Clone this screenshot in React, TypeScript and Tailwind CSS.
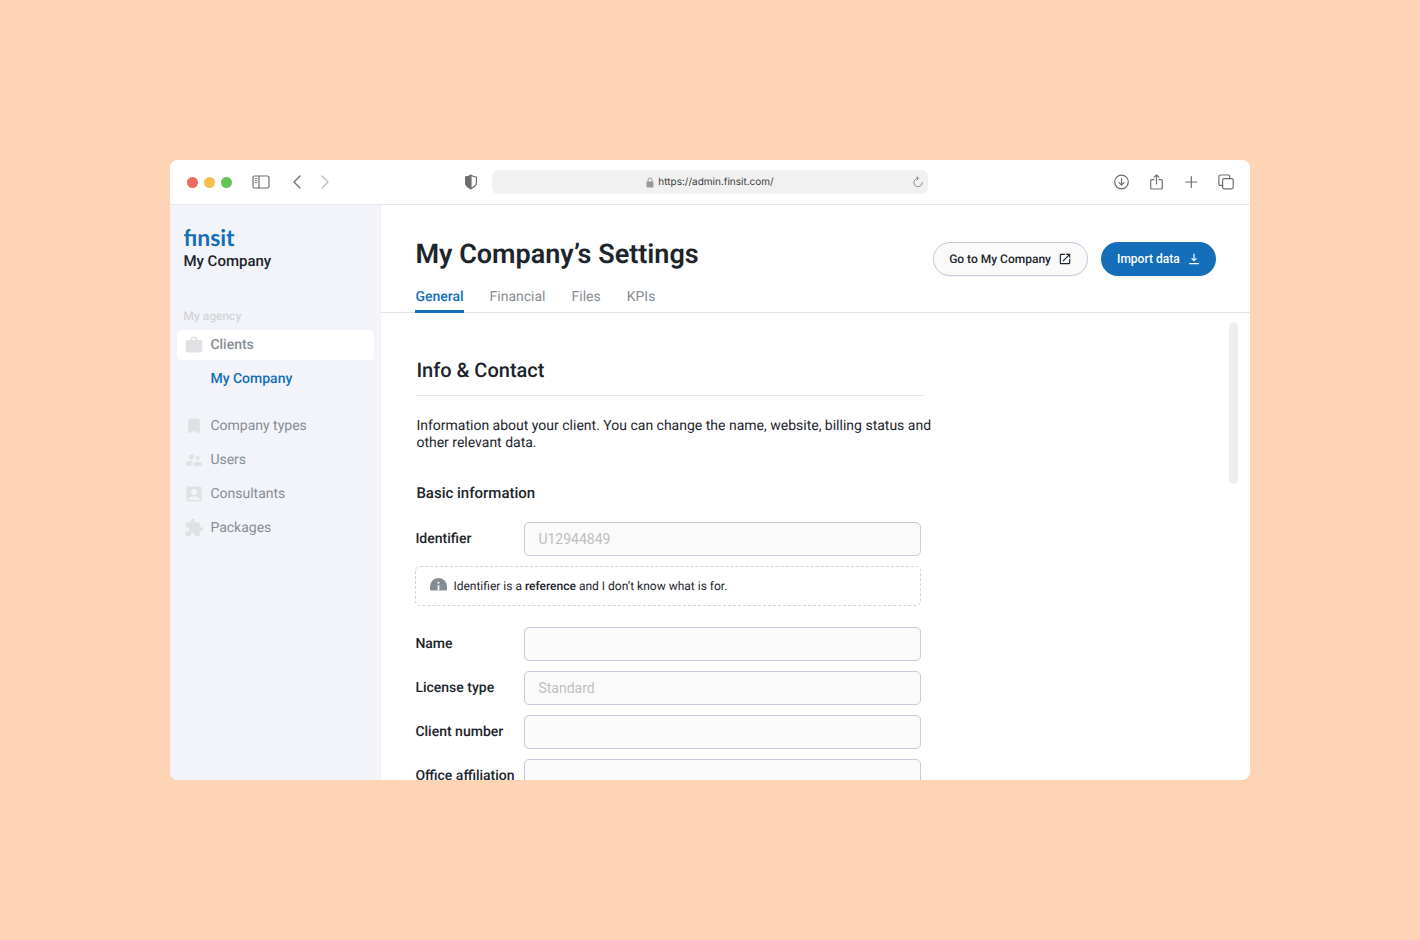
import type { ReactNode } from "react";
import {
  MdAccountBox,
  MdBookmark,
  MdExtension,
  MdOpenInNew,
  MdSupervisorAccount,
  MdWork,
} from "react-icons/md";

type StrokeIconProps = { className: string; viewBox: string; width?: number; children: ReactNode };

function StrokeIcon({ className, viewBox, width = 1.2, children }: StrokeIconProps) {
  return (
    <svg
      className={className}
      viewBox={viewBox}
      fill="none"
      stroke="currentColor"
      strokeWidth={width}
      strokeLinecap="round"
      strokeLinejoin="round"
      aria-hidden="true"
    >
      {children}
    </svg>
  );
}

function BrowserBar() {
  return (
    <header className="grid h-[45px] shrink-0 grid-cols-[minmax(0,1fr)_minmax(0,436px)_minmax(0,1fr)] items-center border-b border-[#e6e7e9] bg-white text-[#6e6e6e]">
      <div className="flex items-center pl-[17px] pr-3.5">
        <div className="flex gap-1.5">
          <span className="size-[11px] rounded-full bg-[#ed6a5e]" />
          <span className="size-[11px] rounded-full bg-[#f4bf4f]" />
          <span className="size-[11px] rounded-full bg-[#61c554]" />
        </div>
        <button type="button" aria-label="Toggle sidebar" className="ml-5">
          <StrokeIcon className="h-[14px] w-[18px]" viewBox="0 0 18 14">
            <rect x="1" y="1" width="16" height="12" rx="1.5" />
            <path d="M7 1v12" />
            <path d="M3 3.6h2M3 5.6h2M3 7.6h2" strokeWidth="0.9" />
          </StrokeIcon>
        </button>
        <button type="button" aria-label="Back" className="ml-[19px]">
          <StrokeIcon className="h-[14px] w-4" viewBox="0 0 16 14" width={1.4}>
            <path d="M11 1 5 7l6 6" />
          </StrokeIcon>
        </button>
        <button type="button" aria-label="Forward" className="ml-3 text-[#bdbdbd]">
          <StrokeIcon className="h-[14px] w-4" viewBox="0 0 16 14" width={1.4}>
            <path d="m5 1 6 6-6 6" />
          </StrokeIcon>
        </button>
        <button type="button" aria-label="Privacy report" className="ml-auto">
          <StrokeIcon className="h-4 w-[14px]" viewBox="0 0 14 16">
            <path d="M7 1.2c1.700 1 3.300 1.600 5.400 1.800v6c0 2.300-2.200 4-5.400 5.600C3.800 13 1.600 11.300 1.600 9V3C3.700 2.800 5.300 2.200 7 1.200Z" />
            <path d="M7 1.200v13.400C3.800 13 1.600 11.300 1.600 9V3C3.700 2.800 5.300 2.200 7 1.200Z" fill="currentColor" />
          </StrokeIcon>
        </button>
      </div>
      <div className="flex h-6 items-center rounded-md bg-[#f1f1f1] px-1">
        <span className="flex-1" />
        <svg className="h-[11px] w-2 text-[#999999]" viewBox="0 0 8 11" aria-hidden="true">
          <rect x="0.500" y="4.600" width="7" height="6" rx="1" fill="currentColor" />
          <path d="M2 5V3a2 2 0 0 1 4 0v2" fill="none" stroke="currentColor" />
        </svg>
        <span className="ml-1 font-[Inter,sans-serif] text-[10px] leading-4 text-[#3c3c3c]">https://admin.finsit.com/</span>
        <span className="flex flex-1 justify-end">
          <button type="button" aria-label="Reload" className="text-[#8a8a8a]">
            <StrokeIcon className="h-3 w-3" viewBox="0 0 12 12" width={1}>
              <path d="M5 2.300h1.200A4.200 4.200 0 1 0 10.300 6.500" />
              <path d="M4.800 0.500 6.700 2.300 4.900 4.200" />
            </StrokeIcon>
          </button>
        </span>
      </div>
      <div className="flex items-center justify-end gap-[19px] pr-4">
        <button type="button" aria-label="Downloads">
          <StrokeIcon className="size-4" viewBox="0 0 16 16">
            <circle cx="8.500" cy="8" r="6.800" />
            <path d="M8.500 4.500v6.600M6 8.700l2.500 2.500 2.500-2.500" />
          </StrokeIcon>
        </button>
        <button type="button" aria-label="Share">
          <StrokeIcon className="size-4" viewBox="0 0 16 16">
            <path d="M6 5.600H3.700a1 1 0 0 0-1 1v7.400a1 1 0 0 0 1 1h9.600a1 1 0 0 0 1-1V6.600a1 1 0 0 0-1-1H11" />
            <path d="M8.500 10V0.800M6.100 3.200l2.400-2.400 2.400 2.400" />
          </StrokeIcon>
        </button>
        <button type="button" aria-label="New tab">
          <StrokeIcon className="size-4" viewBox="0 0 16 16">
            <path d="M8.300 2.500v11M2.800 8h11" />
          </StrokeIcon>
        </button>
        <button type="button" aria-label="Tab overview">
          <StrokeIcon className="size-4" viewBox="0 0 16 16">
            <rect x="4.600" y="4.600" width="10.600" height="10.200" rx="1.500" />
            <path d="M4.600 11.400H2.400A1.500 1.500 0 0 1 0.900 9.900V2.500A1.500 1.500 0 0 1 2.400 1h7.800a1.500 1.500 0 0 1 1.500 1.500v2.100" />
          </StrokeIcon>
        </button>
      </div>
    </header>
  );
}

const navItems = [
  { label: "Company types", Icon: MdBookmark },
  { label: "Users", Icon: MdSupervisorAccount },
  { label: "Consultants", Icon: MdAccountBox },
  { label: "Packages", Icon: MdExtension },
];

function Sidebar() {
  return (
    <aside className="w-[211px] shrink-0 bg-[#f3f4f9] px-[7px] pt-[18px] text-sm">
      <div className="px-1.5">
        <div className="font-[Lato,sans-serif] text-[23px] leading-7 font-bold text-[#146eb9]">fınsit</div>
        <div className="text-[15px] leading-5 font-medium text-[#1c252c]">My Company</div>
      </div>
      <div className="mt-[37px] px-1.5 text-xs leading-4 font-medium text-[#d2d5d9]">My agency</div>
      <nav className="mt-1.5 text-[#868e95]">
        <a href="#clients" className="flex h-[30px] items-center gap-1.5 rounded-[5px] bg-white px-[7px] font-medium">
          <MdWork className="size-5 text-[#dfe1e4]" />
          Clients
        </a>
        <a href="#my-company" className="mt-1 flex h-[30px] items-center pl-[33px] font-medium text-[#146eb9]">
          My Company
        </a>
        <ul className="mt-[17px] flex flex-col gap-1">
          {navItems.map(({ label, Icon }) => (
            <li key={label}>
              <a href="#section" className="flex h-[30px] items-center gap-1.5 px-[7px]">
                <Icon className="size-5 text-[#dfe1e4]" />
                {label}
              </a>
            </li>
          ))}
        </ul>
      </nav>
    </aside>
  );
}

function PageHeader() {
  return (
    <div className="flex h-[108px] shrink-0 justify-between border-b border-[#e3e5e8] px-[34px]">
      <div className="flex flex-col justify-between pt-[31px]">
        <h1 className="text-[27px] leading-9 font-semibold text-[#1c252c]">My Company’s Settings</h1>
        <nav className="-mb-px flex gap-[26px] text-sm leading-5 text-[#868e95]">
          <a href="#general" className="border-b-3 border-[#146eb9] pb-[3px] font-medium text-[#146eb9]">General</a>
          <a href="#financial">Financial</a>
          <a href="#files">Files</a>
          <a href="#kpis">KPIs</a>
        </nav>
      </div>
      <div className="flex gap-[13px] pt-[37px] text-xs font-medium">
        <a
          href="#my-company"
          className="flex h-[34px] items-center gap-[7px] rounded-full border border-[#c9c6de] bg-[#fafafa] px-[15px] text-[#1c252c] shadow-xs"
        >
          Go to My Company
          <MdOpenInNew className="size-[14px]" />
        </a>
        <button type="button" className="flex h-[34px] items-center gap-2 rounded-full bg-[#146eb9] px-4 text-white shadow-xs">
          Import data
          <StrokeIcon className="size-3" viewBox="0 0 12 12">
            <path d="M6 1v6.500M4 5.700l2 2 2-2M1.500 10.700h9" />
          </StrokeIcon>
        </button>
      </div>
    </div>
  );
}

type FieldProps = { id: string; label: string; placeholder?: string };

function Field({ id, label, placeholder }: FieldProps) {
  return (
    <div className="flex items-center">
      <label htmlFor={id} className="w-[109px] shrink-0 text-sm font-medium">
        {label}
      </label>
      <input
        id={id}
        type="text"
        placeholder={placeholder}
        className="h-[34px] min-w-0 flex-1 rounded-[5px] border border-[#cac8de] bg-[#fafafa] px-[13px] text-sm placeholder:text-[#bdbfc2]"
      />
    </div>
  );
}

function SettingsForm() {
  return (
    <form className="w-full max-w-[506px] pt-[43px] text-[#1c252c]">
      <div className="-mr-4 ml-px">
        <h2 className="mr-3.5 border-b border-[#e3e5e8] pb-[11px] text-xl leading-7 font-medium">Info &amp; Contact</h2>
        <p className="mt-[22px] text-sm leading-[17px]">
          Information about your client. You can change the name, website, billing status and other relevant data.
        </p>
        <h3 className="mt-[31px] text-[15px] leading-5 font-medium">Basic information</h3>
      </div>
      <div className="mt-[19px]">
        <Field id="identifier" label="Identifier" placeholder="U12944849" />
      </div>
      <div className="mt-2.5 flex h-10 items-center gap-1.5 rounded-[5px] border border-dashed border-[#d3d2e0] px-3.5 text-xs">
        <svg className="mb-1 h-[13px] w-[17px] text-[#858d94]" viewBox="0 0 17 13" aria-hidden="true">
          <path d="M1 12.500Q0 12.500 0 11.300V8.500a8.500 8.500 0 0 1 17 0v2.800Q17 12.500 16 12.500Z" fill="currentColor" />
          <path d="M8.500 7.200v5.300" stroke="white" strokeWidth="1.600" />
          <circle cx="8.500" cy="4.800" r="1" fill="white" />
        </svg>
        <span>
          Identifier is a <strong className="font-medium">reference</strong> and I don’t know what is for.
        </span>
      </div>
      <div className="mt-[21px] flex flex-col gap-2.5">
        <Field id="name" label="Name" />
        <Field id="license" label="License type" placeholder="Standard" />
        <Field id="client-number" label="Client number" />
        <Field id="office" label="Office affiliation" />
      </div>
    </form>
  );
}

export default function App() {
  return (
    <div className="flex h-screen flex-col bg-[#ffd4b5] px-[12%] py-40 font-[Roboto,sans-serif] [text-rendering:geometricPrecision]">
      <div className="flex min-h-0 flex-1 flex-col overflow-hidden rounded-lg bg-white">
        <BrowserBar />
        <div className="flex min-h-0 flex-1">
          <Sidebar />
          <main className="flex min-w-0 flex-1 flex-col">
            <PageHeader />
            <div className="flex min-h-0 flex-1 justify-between overflow-hidden pr-3 pl-[34px]">
              <SettingsForm />
              <div className="mt-[9px] h-[162px] w-[9px] shrink-0 rounded-full bg-[#eeeeee]" />
            </div>
          </main>
        </div>
      </div>
    </div>
  );
}
